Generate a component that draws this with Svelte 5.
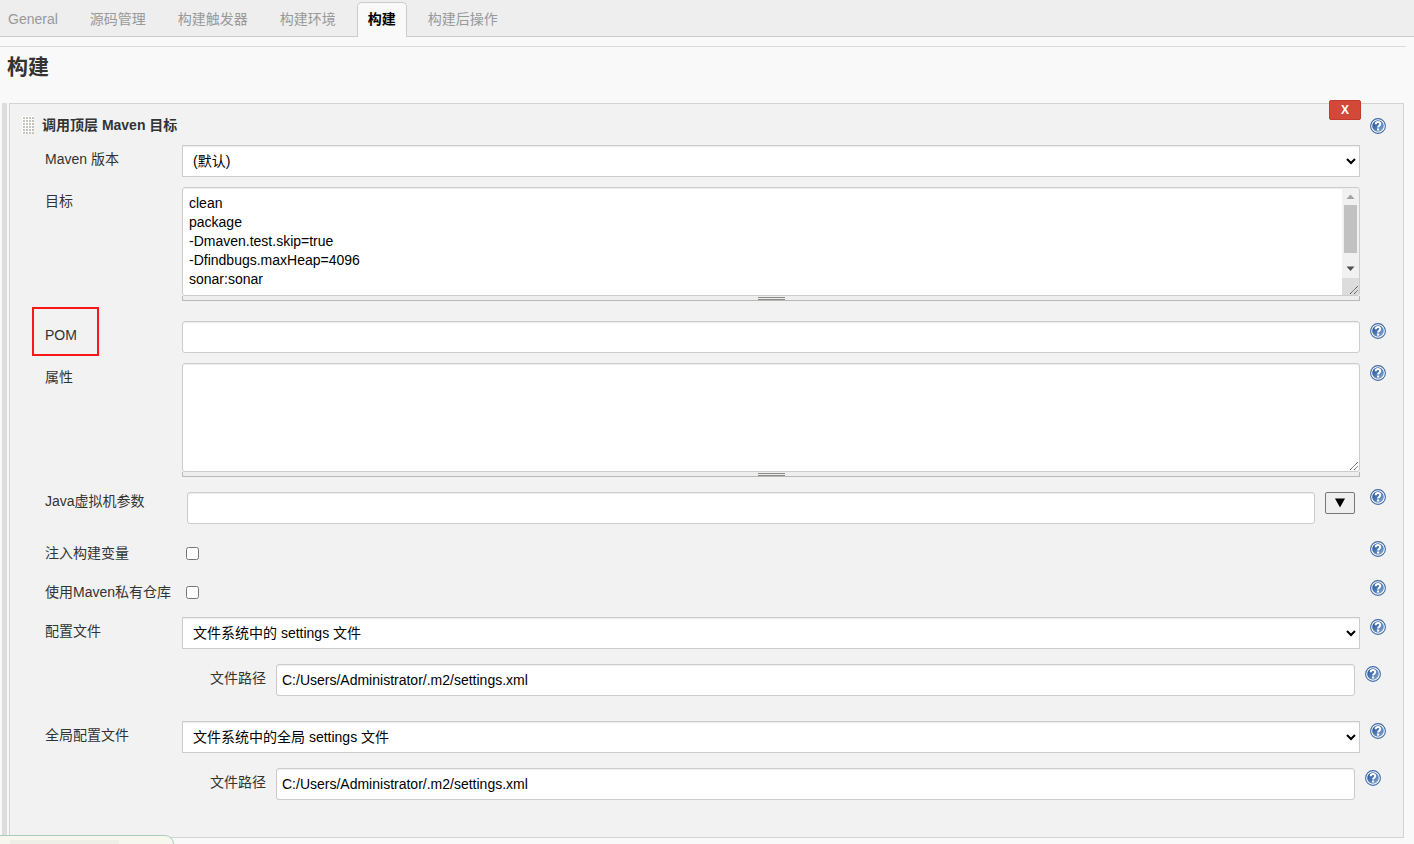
<script>
  const tabs = ['General', '源码管理', '构建触发器', '构建环境', '构建', '构建后操作'];
  let active = $state('构建');
  let goals = $state('clean\npackage\n-Dmaven.test.skip=true\n-Dfindbugs.maxHeap=4096\nsonar:sonar');
  let pom = $state('');
  let properties = $state('');
  let jvm = $state('');
  let inject = $state(false);
  let privateRepo = $state(false);
  let settings = $state('C:/Users/Administrator/.m2/settings.xml');
  let globalSettings = $state('C:/Users/Administrator/.m2/settings.xml');
</script>

{#snippet help(name)}
  <button type="button" class="help" aria-label={name}>
    <svg width="16" height="16" viewBox="0 0 16 16">
      <defs>
        <linearGradient id="ball" x1="0" y1="0" x2="1" y2="1">
          <stop offset="0" stop-color="#1f4a8e" />
          <stop offset="0.5" stop-color="#4f7ab5" />
          <stop offset="1" stop-color="#8fb0d6" />
        </linearGradient>
      </defs>
      <circle cx="8" cy="8" r="7.4" fill="#fff" stroke="#4068a6" stroke-width="1.1" />
      <circle cx="8" cy="8" r="5.8" fill="url(#ball)" />
      <path d="M5.7 6.3C5.7 3.4 10.3 3.4 10.3 6.1C10.3 7.7 8.1 7.7 8.1 9.6" fill="none" stroke="#fff" stroke-width="2" />
      <rect x="7" y="10.5" width="2.1" height="2" fill="#fff" />
    </svg>
  </button>
{/snippet}

{#snippet grip()}
  <svg class="grip" width="10" height="10" viewBox="0 0 10 10" aria-hidden="true">
    <path d="M1 9L9 1M5 9L9 5" stroke="#555" stroke-width="1" stroke-dasharray="1.4 0.3" />
  </svg>
{/snippet}

<nav>
  {#each tabs as tab}
    <button type="button" class:active={active === tab} onclick={() => (active = tab)}>{tab}</button>
  {/each}
</nav>

<main>
  <hr />
  <h1>构建</h1>

  <div class="builders">
    <section>
      <button type="button" class="delete">X</button>
      <header>
        <svg width="12" height="18" viewBox="0 0 12 18" aria-hidden="true">
          <defs>
            <pattern id="dots" width="3" height="3" patternUnits="userSpaceOnUse">
              <rect width="3" height="3" fill="#fff" />
              <rect x="1" y="1" width="2" height="2" fill="#c4c4bc" />
            </pattern>
          </defs>
          <rect width="12" height="18" fill="url(#dots)" />
        </svg>
        <h2>调用顶层 Maven 目标</h2>
        {@render help('帮助')}
      </header>

      <form>
        <div class="row">
          <label for="version">Maven 版本</label>
          <select id="version"><option>(默认)</option></select>
        </div>

        <div class="row spaced">
          <label for="goals">目标</label>
          <div class="area">
            <div class="box">
              <textarea id="goals" bind:value={goals}></textarea>
              <div class="scroll" aria-hidden="true">
                <svg width="15" height="16" viewBox="0 0 15 16"><path d="M3.5 10L7.5 5.5L11.5 10Z" fill="#a3a3a3" /></svg>
                <span class="track"><span class="thumb"></span></span>
                <svg width="15" height="16" viewBox="0 0 15 16"><path d="M3.5 5.5L7.5 10L11.5 5.5Z" fill="#505050" /></svg>
                <span class="corner"></span>
              </div>
              {@render grip()}
            </div>
            <div class="handle"><span></span></div>
          </div>
        </div>

        <div class="row">
          <label for="pom" class="marked">POM</label>
          <input id="pom" type="text" bind:value={pom} />
          {@render help('POM')}
        </div>

        <div class="row">
          <label for="properties">属性</label>
          <div class="area">
            <div class="box">
              <textarea id="properties" bind:value={properties}></textarea>
              {@render grip()}
            </div>
            <div class="handle"><span></span></div>
          </div>
          {@render help('属性')}
        </div>

        <div class="row">
          <label for="jvm">Java虚拟机参数</label>
          <div class="expand">
            <input id="jvm" type="text" bind:value={jvm} />
            <button type="button" aria-label="展开">
              <svg width="10" height="10" viewBox="0 0 10 10"><path d="M0 0.5H10L5 9.5Z" fill="#000" /></svg>
            </button>
          </div>
          {@render help('Java虚拟机参数')}
        </div>

        <div class="row">
          <label for="inject">注入构建变量</label>
          <div class="check"><input id="inject" type="checkbox" bind:checked={inject} /></div>
          {@render help('注入构建变量')}
        </div>

        <div class="row">
          <label for="private">使用Maven私有仓库</label>
          <div class="check"><input id="private" type="checkbox" bind:checked={privateRepo} /></div>
          {@render help('使用Maven私有仓库')}
        </div>

        <div class="row">
          <label for="config">配置文件</label>
          <select id="config"><option>文件系统中的 settings 文件</option></select>
          {@render help('配置文件')}
        </div>
        <div class="row nested">
          <label for="path">文件路径</label>
          <input id="path" type="text" bind:value={settings} />
          {@render help('文件路径')}
        </div>

        <div class="row">
          <label for="global">全局配置文件</label>
          <select id="global"><option>文件系统中的全局 settings 文件</option></select>
          {@render help('全局配置文件')}
        </div>
        <div class="row nested">
          <label for="global-path">文件路径</label>
          <input id="global-path" type="text" bind:value={globalSettings} />
          {@render help('文件路径')}
        </div>
      </form>
    </section>
  </div>
</main>

<div class="footer-bar"><span></span></div>

<style>
  :global(body) {
    background: #f9f9f9;
    color: #333;
    font: 14px/18px 'Liberation Sans', 'Noto Sans CJK SC', sans-serif;
  }
  *, *::before {
    box-sizing: border-box;
  }
  button, input, select, textarea {
    margin: 0;
    font: inherit;
    color: #000;
  }
  nav {
    display: flex;
    gap: 10px;
    height: 37px;
    padding-top: 2px;
    background: #eee;
    border-bottom: 1px solid #ccc;
  }
  nav button {
    height: 35px;
    padding: 0 10px 2px;
    border: 1px solid transparent;
    border-bottom: 0;
    border-radius: 5px 5px 0 0;
    background: none;
    color: #999;
  }
  nav button:first-child {
    padding-left: 7px;
  }
  nav button.active {
    border-color: #ccc;
    background: #f9f9f9;
    color: #000;
    font-weight: bold;
  }
  main {
    padding: 9px 8px 6px 0;
  }
  hr {
    margin: 0;
    border: 0;
    border-top: 1px solid #ddd;
  }
  h1 {
    margin: 0 0 16px;
    padding: 4px 0 4px 7px;
    font-size: 21px;
    line-height: 32px;
  }
  .builders {
    margin: 0 2px 0 2px;
    padding-left: 2px;
    border-left: 5px solid #ddd;
  }
  section {
    position: relative;
    padding: 10px 0 22px 12px;
    background: #f2f2f2;
    border: 1px solid #d3d3d3;
  }
  .delete {
    position: absolute;
    top: -4px;
    right: 42px;
    width: 32px;
    height: 20px;
    padding: 0;
    border: 1px solid #c23a2b;
    border-radius: 2px;
    background: #d24939;
    color: #fff;
    font-size: 12px;
    font-weight: bold;
    line-height: 18px;
  }
  header {
    display: flex;
    align-items: center;
    gap: 8px;
    height: 22px;
    padding-right: 17px;
    margin-bottom: 9px;
  }
  h2 {
    flex: 1;
    margin: 0;
    font-size: 14px;
  }
  header .help {
    margin: 2px 0 0;
  }
  form {
    display: flex;
    flex-direction: column;
    gap: 10px;
    padding-left: 23px;
  }
  .row {
    display: grid;
    grid-template-columns: 137px minmax(0, 1fr) 43px;
    align-items: start;
  }
  .spaced {
    padding-bottom: 10px;
  }
  .nested {
    grid-template-columns: 66px minmax(0, 1fr) 48px;
    padding: 5px 0 15px 165px;
  }
  label {
    padding-top: 5px;
    white-space: nowrap;
  }
  .marked {
    position: relative;
  }
  .marked::before {
    content: '';
    position: absolute;
    top: -14px;
    left: -13px;
    width: 67px;
    height: 49px;
    border: 2px solid #f81818;
  }
  input[type='text'], select {
    width: 100%;
    height: 32px;
    padding: 0 6px;
    border: 1px solid #ccc;
    border-radius: 3px;
    background: #fff;
    box-shadow: inset 0 1px 1px rgba(0, 0, 0, 0.07);
  }
  input[type='text'] {
    padding: 0 5px;
  }
  select {
    border-radius: 0;
  }
  .box {
    position: relative;
  }
  textarea {
    display: block;
    width: 100%;
    height: 109px;
    padding: 6px;
    border: 1px solid #ccc;
    border-radius: 3px;
    background: #fff;
    box-shadow: inset 0 1px 1px rgba(0, 0, 0, 0.07);
    line-height: 19px;
    resize: none;
    scrollbar-width: none;
  }
  .scroll {
    position: absolute;
    top: 2px;
    right: 1px;
    bottom: 1px;
    display: flex;
    flex-direction: column;
    width: 17px;
    background: #f1f1f1;
  }
  .track {
    flex: 1;
    padding: 0 2px;
  }
  .thumb {
    display: block;
    height: 48px;
    background: #c1c1c1;
  }
  .scroll svg {
    flex: none;
    margin: 0 1px;
  }
  .corner {
    height: 17px;
    margin-top: 1px;
    background: #dcdcdc;
  }
  .grip {
    position: absolute;
    right: 1px;
    bottom: 1px;
  }
  .handle {
    height: 5px;
    border: 1px solid #b8b8b4;
    border-top: 0;
    background: #eee;
  }
  .handle span {
    display: block;
    width: 27px;
    height: 4px;
    margin: 0 auto;
    padding-top: 1px;
    background: linear-gradient(#888a85, #888a85) 0 1px / 100% 1px no-repeat,
      linear-gradient(#888a85, #888a85) 0 3px / 100% 1px no-repeat;
  }
  .help {
    display: block;
    width: 16px;
    height: 16px;
    margin: 2px 0 0 10px;
    padding: 0;
    border: 0;
    background: none;
    grid-column: 3;
  }
  .help svg {
    display: block;
  }
  .expand {
    display: flex;
    align-items: flex-start;
    gap: 10px;
    padding: 5px;
  }
  .expand button {
    display: grid;
    place-items: center;
    flex: none;
    width: 30px;
    height: 22px;
    padding: 0;
    border: 1px solid #767676;
    border-radius: 2px;
    background: #efefef;
  }
  .check {
    display: flex;
    height: 29px;
    padding: 8px 0 0 4px;
  }
  .check input {
    width: 13px;
    height: 13px;
  }
  .footer-bar {
    position: fixed;
    left: 0;
    bottom: 0;
    width: 174px;
    height: 9px;
    padding: 4px 0 0 10px;
    border: 1px solid #a9cdb9;
    border-width: 1px 1px 0 0;
    border-radius: 0 9px 0 0;
    background: #f6f8ef;
  }
  .footer-bar span {
    display: block;
    width: 109px;
    height: 4px;
    border-radius: 2px 2px 0 0;
    background: #eef0e8;
  }
</style>
